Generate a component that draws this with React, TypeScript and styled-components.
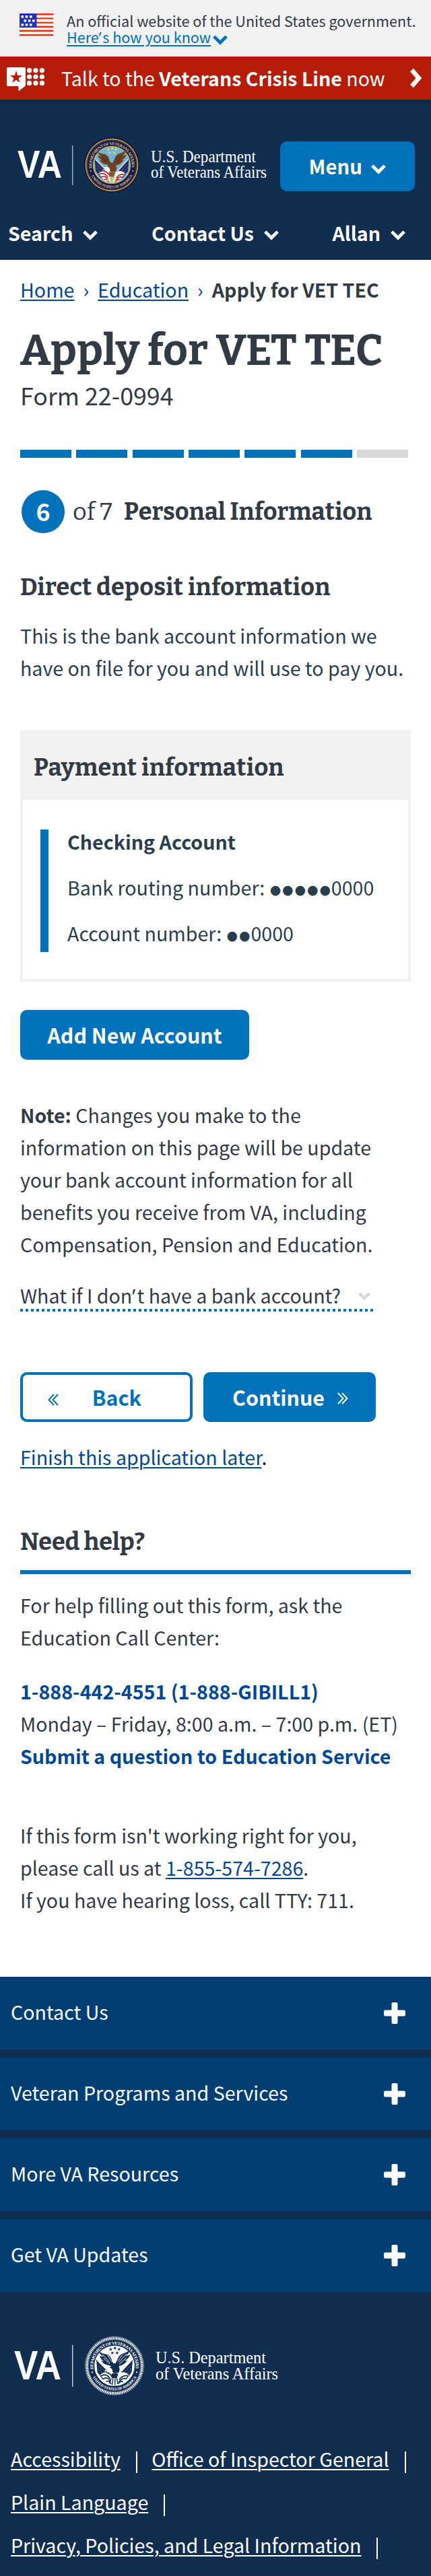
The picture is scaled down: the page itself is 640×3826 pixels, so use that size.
import React from 'react';
import styled, { createGlobalStyle, css } from 'styled-components';

const sans = `"Source Sans Pro", "Noto Sans CJK SC", "Noto Sans", sans-serif`;
const slab = `"Bitter", "DejaVu Serif Condensed", "Noto Serif", serif`;
const color = {
  ink: '#323a45',
  slate: '#283e4d',
  blue: '#0071bb',
  link: '#004795',
  navy: '#112e51',
  navyLight: '#003e73',
  red: '#b51d09',
  grayLight: '#f1f1f1',
  gray: '#d6d7d9',
};

const GlobalStyle = createGlobalStyle`
  *, *::before, *::after { box-sizing: border-box; }
  body { margin: 0; background: #fff; color: ${color.ink}; font-family: ${sans}; font-size: 28.6px; line-height: 48px; }
  h1, h2, h3, p, ul { margin: 0; padding: 0; font-weight: inherit; }
  ul { list-style: none; }
  svg { display: block; flex: none; }
`;

const Page = styled.div`
  width: 640px;
  height: 3826px;
  overflow: hidden;
  display: flex;
  flex-direction: column;
`;

const Link = styled.a<{ $tone?: string }>`
  color: ${(p) => p.$tone ?? color.link};
  text-decoration: underline;
  text-decoration-thickness: 2px;
  text-underline-offset: 3px;
`;
const Apostrophe = styled.span`
  font-family: "Noto Sans", sans-serif;
  letter-spacing: 0.08em;
`;

/* Government banner */
const GovBanner = styled.div`
  height: 84px;
  padding: 19px 0 0 29px;
  background: ${color.grayLight};
  display: flex;
  gap: 20px;
`;
const FlagSvg = styled.svg`
  margin-top: 1px;
`;
const GovText = styled.div`
  font-size: 21.6px;
  line-height: 24px;
  white-space: nowrap;
`;
const KnowLine = styled.div`
  display: flex;
  gap: 3px;
  color: ${color.blue};
  svg { margin-top: 9px; }
`;

/* Crisis line */
const CrisisBar = styled.div`
  height: 64px;
  padding: 0 13px 0 10px;
  background: ${color.red};
  color: #fff;
  display: flex;
  align-items: center;
`;
const CrisisSvg = styled.svg`
  margin-top: 5px;
`;
const CrisisText = styled.div`
  flex: 1;
  margin-left: 24px;
  font-size: 28.5px;
  white-space: nowrap;
`;

/* Header */
const Header = styled.header`
  height: 238px;
  background: linear-gradient(rgba(0, 0, 0, 0.14), rgba(0, 0, 0, 0) 12px) ${color.navy};
  color: #fff;
`;
const HeaderTop = styled.div`
  height: 186px;
  padding: 50px 24px 0 0;
  display: flex;
  justify-content: space-between;
  align-items: flex-start;
`;
const MenuButton = styled.button`
  width: 200px;
  height: 74px;
  margin-top: 12px;
  padding: 0 0 2px;
  border: 0;
  border-radius: 10px;
  background: ${color.blue};
  color: #fff;
  font: 700 29.2px/48px ${sans};
  display: flex;
  align-items: center;
  justify-content: center;
  gap: 13.6px;
  svg { margin-top: 10px; }
`;
const Nav = styled.nav`
  height: 48px;
  padding: 0 38px 0 12px;
  margin-top: -12px;
  display: flex;
  justify-content: space-between;
`;
const NavItem = styled.div`
  font-weight: 700;
  display: flex;
  gap: 15px;
  svg { margin-top: 20px; }
`;

/* Main */
const Main = styled.main`
  height: 2550px;
  padding: 20px 30px 0;
`;
const Breadcrumbs = styled.nav`
  display: flex;
  gap: 13px;
  white-space: nowrap;
  color: ${color.link};
`;
const Current = styled.strong`
  color: ${color.ink};
`;
const Title = styled.h1`
  margin-top: 31px;
  font: 700 64px/72px ${slab};
  white-space: nowrap;
`;
const Subtitle = styled.p`
  margin-top: 3px;
  font-size: 35.8px;
  line-height: 52px;
`;
const Progress = styled.div`
  margin-top: 56px;
  width: 584px;
  height: 12px;
  display: flex;
  gap: 7.33px;
`;
const Segment = styled.span<{ $done: boolean }>`
  width: 76px;
  background: ${(p) => (p.$done ? color.blue : color.gray)};
`;
const Step = styled.div`
  margin-top: 48px;
  height: 64px;
  padding-left: 2px;
  display: flex;
  align-items: center;
  font-family: ${slab};
  white-space: nowrap;
`;
const StepNumber = styled.span`
  width: 64px;
  height: 64px;
  border-radius: 50%;
  background: ${color.blue};
  color: #fff;
  font: 700 35.8px/60px ${sans};
  text-align: center;
`;
const StepOf = styled.span`
  margin-left: 12px;
  font-size: 36px;
`;
const heading = css`
  font: 700 36px/48px ${slab};
  white-space: nowrap;
`;
const StepTitle = styled.h2`
  ${heading}
  margin-left: 17.5px;
`;
const Heading = styled.h3<{ $top: number; $track?: number }>`
  ${heading}
  margin-top: ${(p) => p.$top}px;
  letter-spacing: ${(p) => p.$track ?? 0}px;
`;
const Text = styled.p<{ $top: number; $tone?: string }>`
  margin-top: ${(p) => p.$top}px;
  color: ${(p) => p.$tone ?? color.ink};
  white-space: nowrap;
`;

const Panel = styled.section`
  margin-top: 68px;
  height: 374px;
  border: 4px solid ${color.grayLight};
  border-top: 0;
`;
const PanelHeader = styled.div`
  height: 104px;
  padding: 32px 16px 0;
  background: ${color.grayLight};
`;
const Account = styled.div`
  margin: 44px 0 0 26px;
  height: 182px;
  border-left: 12px solid ${color.blue};
  padding-left: 28px;
  color: ${color.slate};
  line-height: 36px;
  white-space: nowrap;
  display: flex;
  flex-direction: column;
  gap: 32px;
`;
const Mask = styled.span`
  font-family: "DejaVu Sans", sans-serif;
  font-size: 19px;
  line-height: 1;
  letter-spacing: 1.85px;
  margin: 0 -1px 0 1px;
  vertical-align: 2.5px;
`;

const Button = styled.button<{ $outline?: boolean; $width: number }>`
  width: ${(p) => p.$width}px;
  height: 74px;
  padding: 0;
  border: ${(p) => (p.$outline ? `4px solid ${color.blue}` : '0')};
  border-radius: 10px;
  background: ${(p) => (p.$outline ? '#fff' : color.blue)};
  color: ${(p) => (p.$outline ? color.blue : '#fff')};
  font: 700 30.4px/48px ${sans};
  display: flex;
  align-items: center;
  justify-content: center;
  svg { margin-top: ${(p) => (p.$outline ? 8 : 4)}px; }
`;
const AddRow = styled.div`
  margin-top: 42px;
`;
const Expander = styled.div`
  margin-top: 28px;
  width: 524px;
  height: 48px;
  display: flex;
  justify-content: space-between;
  white-space: nowrap;
  padding-right: 4px;
  svg { margin-top: 19px; }
`;
const Dots = styled.div`
  width: 524px;
  height: 4px;
  margin-top: -4px;
  background: repeating-linear-gradient(90deg, ${color.blue} 0 4px, transparent 4px 8px);
`;
const Actions = styled.div`
  margin-top: 90px;
  display: flex;
  gap: 16px;
`;
const BackLabel = styled.span`
  margin: 0 35px 0 49.5px;
`;
const ContinueLabel = styled.span`
  margin: 0 19.5px 0 2.5px;
`;
const Rule = styled.hr`
  margin: 18px 0 0;
  border: 0;
  height: 6px;
  background: ${color.blue};
`;
const Strong = styled.strong`
  color: ${color.link};
`;
const Stop = styled.span`
  color: #111;
`;

/* Footer */
const Footer = styled.footer`
  flex: 1;
  background: ${color.navy};
  color: #fff;
`;
const AccordionList = styled.div`
  display: grid;
  gap: 12px;
`;
const AccordionRow = styled.div`
  height: 108px;
  padding: 0 38px 0 16px;
  background: ${color.navyLight};
  display: flex;
  align-items: center;
  justify-content: space-between;
`;
const AccordionLabel = styled.span`
  padding-bottom: 4px;
`;
const FooterLinks = styled.ul`
  padding-left: 16px;
  display: flex;
  flex-wrap: wrap;
  row-gap: 16px;
`;
const FooterItem = styled.li`
  height: 48px;
  display: flex;
  white-space: nowrap;
  margin-right: 21.5px;
  &::after {
    content: '';
    width: 2px;
    height: 32px;
    margin: 13px 0 0 23px;
    background: #fff;
  }
`;

const ChevronDown = ({ w = 22, stroke = '#fff', weight = 4.8 }: { w?: number; stroke?: string; weight?: number }) => (
  <svg width={w} height={(w * 15) / 22} viewBox="0 0 22 15" fill="none">
    <path d="M1.8 2.1 11 11.3 20.2 2.1" stroke={stroke} strokeWidth={weight} />
  </svg>
);
const DoubleAngle = ({ stroke, flip }: { stroke: string; flip?: boolean }) => (
  <svg width="16" height="18" viewBox="0 0 16 18" fill="none">
    <path
      d={flip ? 'M9 1 1.5 9 9 17M15 1 7.5 9 15 17' : 'M1 1 8.5 9 1 17M7 1 14.5 9 7 17'}
      stroke={stroke}
      strokeWidth="2"
    />
  </svg>
);
const Plus = () => (
  <svg width="32" height="32" viewBox="0 0 32 32" fill="#fff">
    <rect x="11.5" width="9" height="32" rx="2" />
    <rect y="11.5" width="32" height="9" rx="2" />
  </svg>
);
const Flag = () => (
  <FlagSvg width="50" height="34" viewBox="0 0 50 34">
    <path fill="#fff" d="M0 0h50v34H0z" />
    <path stroke="#ef2f0c" strokeWidth="2.4" d="M25 1.2h25M25 7.4h25M25 13.6h25M25 19.8h25M0 25.8h50M0 32h50" />
    <path fill="#232fb4" d="M0 0h25.5v21H0z" />
    <path
      fill="#fff"
      d="M2.5 3h3.6v3.4H2.5zM8.7 3h3.6v3.4H8.7zM15 3h3.6v3.4H15zM6.5 9h3.6v3.4H6.5zM12.8 9h3.6v3.4h-3.6zM19 9h3.6v3.4H19zM2.5 15.2h3.6v3.4H2.5zM8.7 15.2h3.6v3.4H8.7zM15 15.2h3.6v3.4H15z"
    />
  </FlagSvg>
);

const starPoints = (cx: number, cy: number, r: number) =>
  Array.from({ length: 10 }, (_, i) => {
    const a = (Math.PI * i) / 5 - Math.PI / 2;
    const d = i % 2 ? r * 0.4 : r;
    return `${(cx + d * Math.cos(a)).toFixed(2)},${(cy + d * Math.sin(a)).toFixed(2)}`;
  }).join(' ');

const CrisisIcon = () => (
  <CrisisSvg width="57" height="37" viewBox="0 0 57 37" fill="#fff">
    <path d="M2 0h24a2 2 0 0 1 2 2v24.5a2 2 0 0 1-1.5 2L17.5 35.5V28H2a2 2 0 0 1-2-2V2a2 2 0 0 1 2-2z" />
    <polygon fill={color.red} points={starPoints(14, 15, 9.5)} />
    {[4.6, 14, 23.4].map((y) => [33.6, 43, 52.4].map((x) => <circle key={`${x}-${y}`} cx={x} cy={y} r="3.6" />))}
  </CrisisSvg>
);

/* Department seal, drawn around the origin with a radius of 122 */
const Seal = ({ id, mono }: { id: string; mono?: boolean }) => {
  const gold = mono ? '#fff' : '#e3bf45';
  const ring = mono ? color.navy : '#1a1a4b';
  const sky = mono ? '#fff' : '#6fb3d6';
  const bird = mono ? color.navy : '#70401f';
  const birdDark = mono ? '#fff' : '#4a2712';
  const canton = mono ? color.navy : '#242a63';
  const stripe = mono ? color.navy : '#c3232f';
  const lettering = mono ? '#fff' : '#d9c98c';
  return (
    <g>
      <circle r="122" fill={mono ? color.navy : '#10123a'} stroke={mono ? '#fff' : '#10123a'} strokeWidth="1.5" />
      <circle r="115" fill="none" stroke={gold} strokeWidth={mono ? 9 : 5} strokeDasharray={mono ? '5 2.2' : '6 1.2'} />
      <circle r="110" fill={ring} stroke={gold} strokeWidth="1" />
      <defs>
        <path id={`${id}-top`} d="M-82.6 33.4A89 89 0 1 1 82.6 33.4" />
        <path id={`${id}-bottom`} d="M-94 42A103 103 0 0 0 94 42" />
      </defs>
      <g fill={lettering} fontFamily='"Liberation Serif", serif' fontWeight="700">
        <text fontSize="18">
          <textPath href={`#${id}-top`} startOffset="20" textLength="304">DEPARTMENT OF VETERANS AFFAIRS</textPath>
        </text>
        <text fontSize="16">
          <textPath href={`#${id}-bottom`} startOffset="7" textLength="224">UNITED STATES OF AMERICA</textPath>
        </text>
        <circle cx="-93" cy="27" r="3" />
        <circle cx="93" cy="27" r="3" />
      </g>
      <circle r="82" fill={sky} stroke={gold} strokeWidth="4" />
      {[[-16, -69], [2, -74], [19, -69], [-9, -54], [11, -54]].map(([x, y]) => (
        <polygon key={`${x}`} points={starPoints(x, y, 8)} fill={mono ? color.navy : '#f0d54a'} />
      ))}
      <path d="M-76 -26-22 26-12 64-50 56-72 26z" fill={canton} />
      <path d="M76 -26 26 24 10 64 50 56 72 26z" fill={canton} />
      <path d="M-72-24-18 30M72-24 24 28" stroke={mono ? '#fff' : '#e7e2d0'} strokeWidth="5" />
      <g stroke="#fff" strokeWidth="2.6" strokeDasharray="2.6 7">
        <path d="M-66 0-36 30M-68 14-42 42M66 0 38 30M68 14 44 42" />
      </g>
      <path d="M-60 38Q-38 18-8 34L-4 78-30 72z" fill="#fff" />
      <path d="M60 38Q38 18 14 34L4 78 30 72z" fill="#fff" />
      <g fill="none" stroke={stripe} strokeWidth="5">
        <path d="M-56 42Q-34 30-18 54M-46 54Q-28 44-16 66M-34 66Q-24 58-14 76M-36 28Q-20 30-10 46" />
        <path d="M56 42Q34 38 20 58M46 54Q32 50 18 68M36 66Q26 62 14 76" />
      </g>
      <path
        d="M-64-60Q-62-46-44-38Q-60-40-62-44Q-60-26-42-20Q-54-20-56-24Q-46-4-24-2L-14 2Q-30 16-22 26Q-8 22-2 30L16 30Q26 18 18 2Q44-4 54-24Q46-20 42-22Q60-28 66-48Q54-40 46-42Q62-50 62-64Q44-52 32-50Q18-44 10-22L4-10Q-6-8-10-18Q-14-42-32-48Q-52-50-64-60z"
        fill={bird}
      />
      <path
        d="M-50-48-20-14M-46-32-20-8M-30-46-12-18M50-50 18-14M50-34 20-6M34-48 14-20"
        stroke={birdDark}
        strokeWidth="2.5"
      />
      <path d="M-34 12Q-24 4-12 12Q-4 22-12 30Q-22 24-32 28Q-28 20-34 12z" fill="#fff" />
      <path d="M-34 15-43 22-32 25z" fill={mono ? '#fff' : '#efb321'} />
      <path d="M-12 34Q4 26 16 36L8 54Q-2 48-12 54z" fill={mono ? color.navy : '#8a5527'} />
      <path d="M-14 54-22 74M-6 54-10 80M2 54 2 80M10 52 14 76" stroke={mono ? color.navy : '#f0d54a'} strokeWidth="4" />
    </g>
  );
};

const HeaderLogo = () => (
  <svg width="410" height="92" viewBox="0 0 410 92" fill="#fff">
    <text x="26" y="66" fontFamily='"Liberation Sans", sans-serif' fontWeight="700" fontSize="58" textLength="66" lengthAdjust="spacingAndGlyphs">VA</text>
    <path fill="#9fabb9" d="M107 18h1.5v59H107z" />
    <g transform="translate(166 47) scale(.334)"><Seal id="seal-header" /></g>
    <g fontFamily='"Liberation Serif", serif' fontSize="24.5">
      <text x="224" y="43" textLength="156" lengthAdjust="spacingAndGlyphs">U.S. Department</text>
      <text x="224" y="66" textLength="172" lengthAdjust="spacingAndGlyphs">of Veterans Affairs</text>
    </g>
  </svg>
);
const FooterLogo = () => (
  <svg width="430" height="224" viewBox="0 0 430 224" fill="#fff">
    <text x="21" y="130" fontFamily='"Liberation Sans", sans-serif' fontWeight="700" fontSize="61" textLength="70" lengthAdjust="spacingAndGlyphs">VA</text>
    <path fill="#c3cad3" d="M107 79h1.5v62H107z" />
    <g transform="translate(170 109.8) scale(.355)"><Seal id="seal-footer" mono /></g>
    <g fontFamily='"Liberation Serif", serif' fontSize="26">
      <text x="231" y="106" textLength="164" lengthAdjust="spacingAndGlyphs">U.S. Department</text>
      <text x="231" y="130" textLength="182" lengthAdjust="spacingAndGlyphs">of Veterans Affairs</text>
    </g>
  </svg>
);

const steps = [true, true, true, true, true, true, false];
const sections = ['Contact Us', 'Veteran Programs and Services', 'More VA Resources', 'Get VA Updates'];
const legal = ['Accessibility', 'Office of Inspector General', 'Plain Language', 'Privacy, Policies, and Legal Information'];

export default function App() {
  return (
    <>
      <GlobalStyle />
      <Page>
        <GovBanner>
          <Flag />
          <GovText>
            An official website of the United States government.
            <KnowLine>
              <Link $tone={color.blue}>Here<Apostrophe>’</Apostrophe>s how you know</Link>
              <ChevronDown stroke={color.blue} />
            </KnowLine>
          </GovText>
        </GovBanner>
        <CrisisBar>
          <CrisisIcon />
          <CrisisText>Talk to the <strong>Veterans Crisis Line</strong> now</CrisisText>
          <svg width="18" height="30" viewBox="0 0 18 30" fill="none">
            <path d="M2.5 3 13 15 2.5 27" stroke="#fff" strokeWidth="6.5" />
          </svg>
        </CrisisBar>
        <Header>
          <HeaderTop>
            <HeaderLogo />
            <MenuButton>Menu<ChevronDown /></MenuButton>
          </HeaderTop>
          <Nav>
            {['Search', 'Contact Us', 'Allan'].map((n) => (
              <NavItem key={n}>{n}<ChevronDown /></NavItem>
            ))}
          </Nav>
        </Header>
        <Main>
          <Breadcrumbs>
            <Link>Home</Link><span>›</span><Link>Education</Link><span>›</span><Current>Apply for VET TEC</Current>
          </Breadcrumbs>
          <Title>Apply for VET TEC</Title>
          <Subtitle>Form 22-0994</Subtitle>
          <Progress>
            {steps.map((done, i) => <Segment key={i} $done={done} />)}
          </Progress>
          <Step>
            <StepNumber>6</StepNumber>
            <StepOf>of 7</StepOf>
            <StepTitle>Personal Information</StepTitle>
          </Step>
          <Heading $top={56} $track={0.22}>Direct deposit information</Heading>
          <Text $top={24} $tone={color.slate}>
            This is the bank account information we<br />have on file for you and will use to pay you.
          </Text>
          <Panel>
            <PanelHeader><Heading $top={0} $track={0.22}>Payment information</Heading></PanelHeader>
            <Account>
              <strong>Checking Account</strong>
              <span>Bank routing number: <Mask>●●●●●</Mask>0000</span>
              <span>Account number: <Mask>●●</Mask>0000</span>
            </Account>
          </Panel>
          <AddRow><Button $width={340}>Add New Account</Button></AddRow>
          <Text $top={58}>
            <strong>Note:</strong> Changes you make to the<br />information on this page will be update<br />
            your bank account information for all<br />benefits you receive from VA, including<br />
            Compensation, Pension and Education.
          </Text>
          <Expander>
            <span>What if I don<Apostrophe>’</Apostrophe>t have a bank account?</span>
            <ChevronDown w={18} stroke={color.gray} weight={5} />
          </Expander>
          <Dots />
          <Actions>
            <Button $outline $width={256}><DoubleAngle stroke={color.blue} flip /><BackLabel>Back</BackLabel></Button>
            <Button $width={256}><ContinueLabel>Continue</ContinueLabel><DoubleAngle stroke="#fff" /></Button>
          </Actions>
          <Text $top={28}><Link>Finish this application later</Link><Stop>.</Stop></Text>
          <Heading $top={78} $track={-0.15}>Need help?</Heading>
          <Rule />
          <Text $top={22}>For help filling out this form, ask the<br />Education Call Center:</Text>
          <Text $top={32}>
            <Strong>1-888-442-4551 (1-888-GIBILL1)</Strong><br />Monday – Friday, 8:00 a.m. – 7:00 p.m. (ET)<br />
            <Strong>Submit a question to Education Service</Strong>
          </Text>
          <Text $top={70}>
            If this form isn't working right for you,<br />please call us at <Link>1-855-574-7286</Link>.<br />
            If you have hearing loss, call TTY: 711.
          </Text>
        </Main>
        <Footer>
          <AccordionList>
            {sections.map((s) => (
              <AccordionRow key={s}><AccordionLabel>{s}</AccordionLabel><Plus /></AccordionRow>
            ))}
          </AccordionList>
          <FooterLogo />
          <FooterLinks>
            {legal.map((l) => <FooterItem key={l}><Link $tone="#fff">{l}</Link></FooterItem>)}
          </FooterLinks>
        </Footer>
      </Page>
    </>
  );
}
